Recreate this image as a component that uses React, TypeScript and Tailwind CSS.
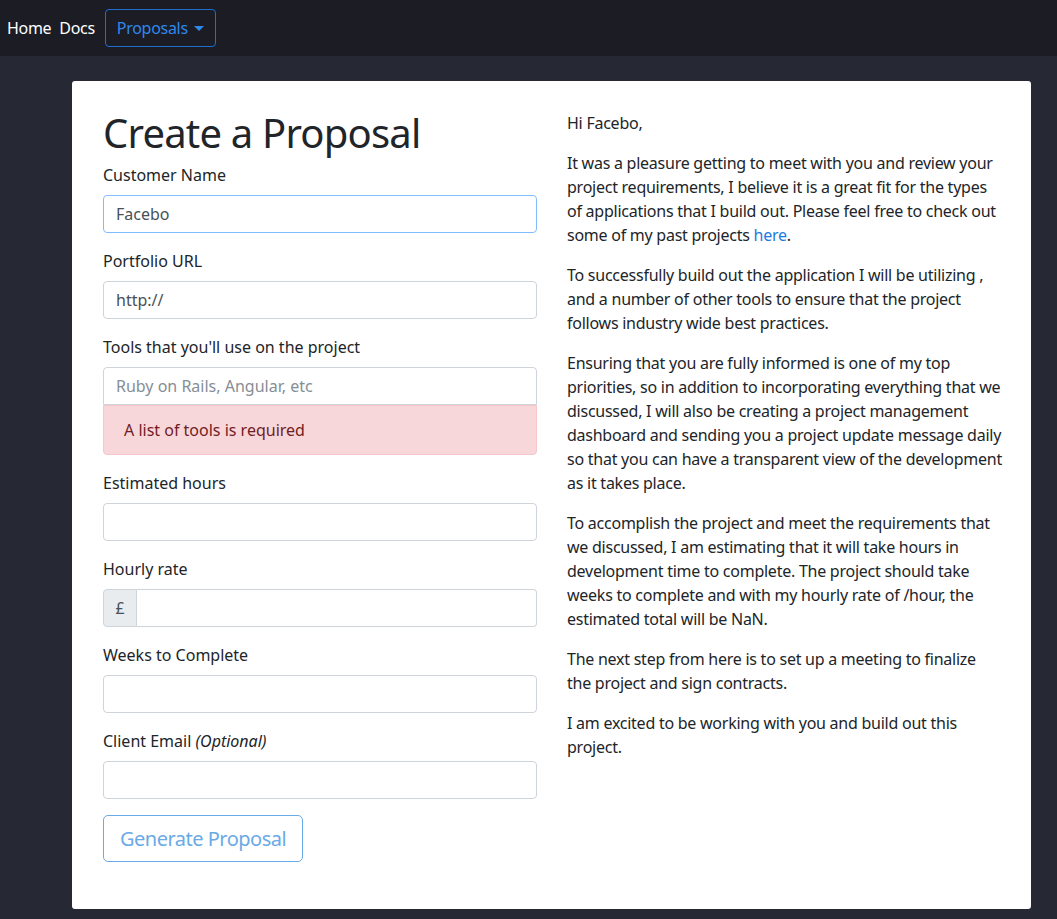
import React from "react";

function Field({
  label,
  children,
}: {
  label: React.ReactNode;
  children: React.ReactNode;
}) {
  return (
    <div className="mb-4">
      <label className="block mb-2 leading-6 text-[#212529]">{label}</label>
      {children}
    </div>
  );
}

const inputBase =
  "block w-full h-[38px] px-3 rounded border bg-white text-[#495057] text-base outline-none placeholder:text-[#868e96]";
const inputCls = `${inputBase} border-[#ced4da]`;

// letter paragraphs, one string per rendered line
const letter: React.ReactNode[][] = [
  [
    "It was a pleasure getting to meet with you and review your",
    "project requirements, I believe it is a great fit for the types",
    "of applications that I build out. Please feel free to check out",
    <>
      some of my past projects <a className="text-[#1f7ae0]">here</a>.
    </>,
  ],
  [
    "To successfully build out the application I will be utilizing ,",
    "and a number of other tools to ensure that the project",
    "follows industry wide best practices.",
  ],
  [
    "Ensuring that you are fully informed is one of my top",
    "priorities, so in addition to incorporating everything that we",
    "discussed, I will also be creating a project management",
    "dashboard and sending you a project update message daily",
    "so that you can have a transparent view of the development",
    "as it takes place.",
  ],
  [
    "To accomplish the project and meet the requirements that",
    "we discussed, I am estimating that it will take hours in",
    "development time to complete. The project should take",
    "weeks to complete and with my hourly rate of /hour, the",
    "estimated total will be NaN.",
  ],
  [
    "The next step from here is to set up a meeting to finalize",
    "the project and sign contracts.",
  ],
  [
    "I am excited to be working with you and build out this",
    "project.",
  ],
];

export default function App() {
  return (
    <div className="min-h-screen bg-[#262833] font-['Noto_Sans',sans-serif] text-base text-[#212529]">
      {/* Navbar */}
      <nav className="h-14 bg-[#1b1c24] flex items-center pl-[7px] gap-2">
        <a className="text-white text-base tracking-[-0.3px]">Home</a>
        <a className="text-white text-base tracking-[-0.3px]">Docs</a>
        <button className="ml-[2px] h-[38px] px-[11px] rounded border border-[#1f6fd1] text-[#3088ec] flex items-center gap-[6px] tracking-[-0.3px]">
          Proposals
          <span className="inline-block w-0 h-0 border-l-[5px] border-r-[5px] border-t-[5px] border-l-transparent border-r-transparent border-t-[#3088ec]" />
        </button>
      </nav>

      {/* Card */}
      <div className="pt-[25px] pb-[10px] pl-[72px] pr-[26px]">
        <div className="bg-white rounded-[3px] px-[31px] pt-[30px] pb-[47px] grid grid-cols-[434px_434px] gap-x-[30px]">
          {/* Form */}
          <div>
            <h1 className="text-[40px] leading-[44px] mb-2 text-[#212529] tracking-[-0.8px]">
              Create a Proposal
            </h1>
            <Field label="Customer Name">
              <input
                className={`${inputBase} border-[#80bdff]`}
                defaultValue="Facebo"
              />
            </Field>
            <Field label="Portfolio URL">
              <input className={inputCls} defaultValue="http://" />
            </Field>
            <Field label="Tools that you'll use on the project">
              <input
                className={`${inputCls} rounded-b-none`}
                placeholder="Ruby on Rails, Angular, etc"
              />
              <div className="h-[50px] flex items-center px-5 rounded-b bg-[#f8d7da] border border-[#f5c6cb] text-[#721c24]">
                A list of tools is required
              </div>
            </Field>
            <Field label="Estimated hours">
              <input className={inputCls} />
            </Field>
            <Field label="Hourly rate">
              <div className="flex h-[38px]">
                <span className="w-[34px] flex items-center justify-center bg-[#e9ecef] border border-[#ced4da] rounded-l text-[#495057]">
                  £
                </span>
                <input className="flex-1 min-w-0 px-3 border border-l-0 border-[#ced4da] rounded-r outline-none" />
              </div>
            </Field>
            <Field label="Weeks to Complete">
              <input className={inputCls} />
            </Field>
            <Field
              label={
                <>
                  Client Email <em>(Optional)</em>
                </>
              }
            >
              <input className={inputCls} />
            </Field>
            <button className="h-[47px] px-4 rounded-[5px] border border-[#6aaae6] text-[#6aaae6] text-xl tracking-[-0.5px]">
              Generate Proposal
            </button>
          </div>

          {/* Letter */}
          <div className="leading-6 text-[#212529] tracking-[-0.25px] whitespace-nowrap">
            <p className="mb-4">Hi Facebo,</p>
            {letter.map((lines, i) => (
              <p key={i} className="mb-4">
                {lines.map((line, j) => (
                  <React.Fragment key={j}>
                    {line}
                    {j < lines.length - 1 && <br />}
                  </React.Fragment>
                ))}
              </p>
            ))}
          </div>
        </div>
      </div>
    </div>
  );
}
